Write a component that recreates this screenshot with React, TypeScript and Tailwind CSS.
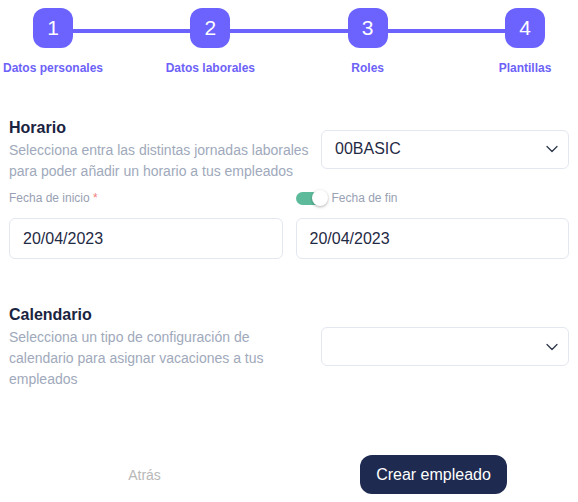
import { ChevronDown } from 'lucide-react'

const steps = ['Datos personales', 'Datos laborales', 'Roles', 'Plantillas']

function Select({ value }: { value?: string }) {
  return (
    <div className="w-[248px] h-[39px] shrink-0 border border-[#e3e7ef] rounded-md flex items-center justify-between pl-[13px] pr-1.5 bg-white">
      <span className="text-base text-[#1f2a44]">{value}</span>
      <ChevronDown className="w-5 h-5 text-[#2d3748]" strokeWidth={1.5} />
    </div>
  )
}

function DateInput({ value }: { value: string }) {
  return (
    <div className="h-[41px] border border-[#e3e7ef] rounded-md flex items-center px-[13px] bg-white">
      <span className="text-base text-[#1f2a44]">{value}</span>
    </div>
  )
}

export default function App() {
  return (
    <div className="w-[578px] h-[502px] bg-white font-['Liberation_Sans',Arial,sans-serif] overflow-hidden">
      {/* Stepper */}
      <div className="relative pt-2">
        <div className="absolute left-[53px] right-[53px] top-[29px] h-1 bg-[#6c63ff]" />
        <div className="relative flex justify-between">
          {steps.map((s, i) => (
            <div key={s} className="w-[106px] flex flex-col items-center">
              <div className="w-10 h-10 rounded-xl bg-[#6c63ff] text-white text-[21px] flex items-center justify-center">
                {i + 1}
              </div>
              <span className="mt-3 text-xs leading-4 font-bold text-[#6d62f7]">{s}</span>
            </div>
          ))}
        </div>
      </div>

      <div className="px-[9px]">
        {/* Horario */}
        <div className="mt-10 flex items-center gap-2">
          <div className="flex-1">
            <h2 className="text-base leading-6 font-bold text-[#1a2340]">Horario</h2>
            <p className="text-sm leading-[21px] text-[#a0a9bb]">
              Selecciona entra las distintas jornadas laborales para poder añadir un horario a tus empleados
            </p>
          </div>
          <Select value="00BASIC" />
        </div>

        <div className="mt-2 grid grid-cols-2 gap-x-[13px]">
          <div className="text-xs leading-4 text-[#98a1b3]">
            Fecha de inicio <span className="text-[#f08080]">*</span>
          </div>
          <div className="flex items-center text-xs leading-4 text-[#98a1b3]">
            <div className="relative w-[32px] h-4 mr-1 flex items-center">
              <div className="w-[27px] h-[13px] rounded-full bg-[#5dbb9c]" />
              <div className="absolute left-[16px] top-0 w-4 h-4 rounded-full bg-white shadow-[0_1px_3px_rgba(0,0,0,0.3)]" />
            </div>
            Fecha de fin
          </div>
          <div className="mt-3">
            <DateInput value="20/04/2023" />
          </div>
          <div className="mt-3">
            <DateInput value="20/04/2023" />
          </div>
        </div>

        {/* Calendario */}
        <div className="mt-[44px] flex items-center gap-2">
          <div className="flex-1">
            <h2 className="text-base leading-6 font-bold text-[#1a2340]">Calendario</h2>
            <p className="max-w-[266px] text-sm leading-[21px] text-[#a0a9bb]">
              Selecciona un tipo de configuración de calendario para asignar vacaciones a tus empleados
            </p>
          </div>
          <Select />
        </div>
      </div>

      {/* Actions */}
      <div className="mt-[65px] grid grid-cols-2 items-center">
        <div className="flex justify-center">
          <button className="text-sm text-[#b8b8b8]">Atrás</button>
        </div>
        <div className="flex justify-center">
          <button className="h-[39px] px-4 rounded-xl bg-[#1e2a4f] text-white text-base">Crear empleado</button>
        </div>
      </div>
    </div>
  )
}
